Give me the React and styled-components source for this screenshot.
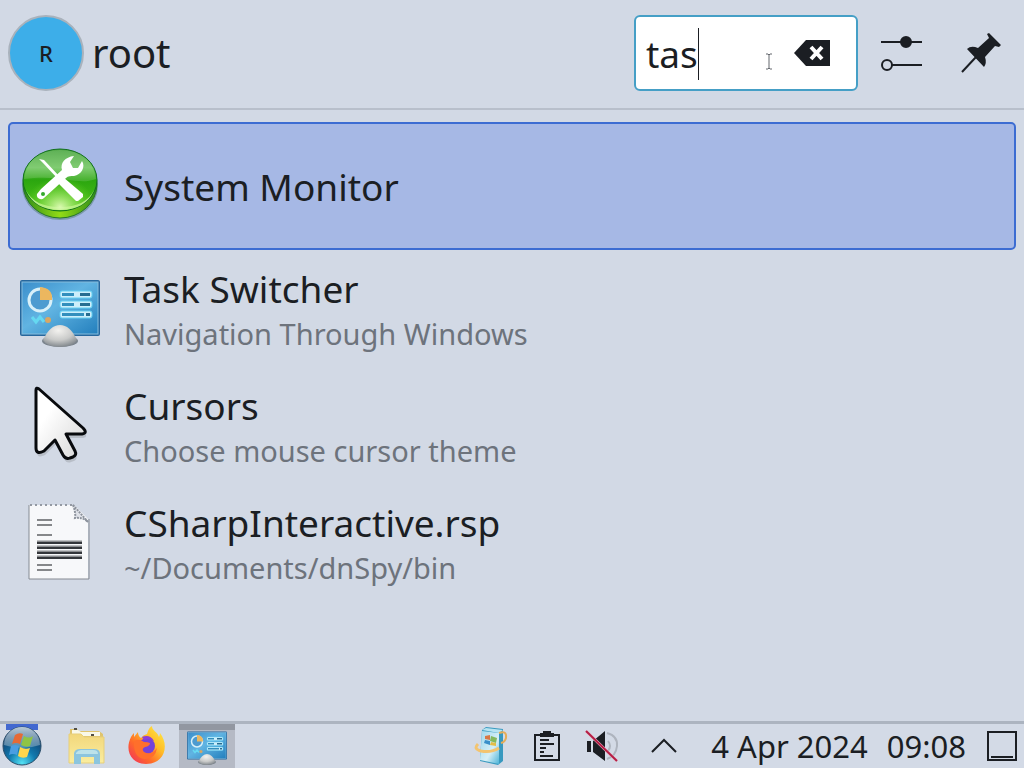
import React, { useState } from "react";
import styled, { createGlobalStyle } from "styled-components";

const GlobalStyle = createGlobalStyle`
  * {
    box-sizing: border-box;
  }
  body {
    margin: 0;
    background: #d2d9e5;
    color: #1b1e23;
    font-family: "Noto Sans", sans-serif;
  }
  button, input {
    font: inherit;
    color: inherit;
  }
`;
const Screen = styled.div`
  min-height: 100vh;
  display: flex;
  flex-direction: column;
`;
const Header = styled.header`
  display: flex;
  align-items: center;
  justify-content: space-between;
  padding: 15px 21px 17px 8px;
  border-bottom: 2px solid #b8bfcb;
`;
const User = styled.div`
  display: flex;
  align-items: center;
  gap: 8px;
`;
const Avatar = styled.div`
  width: 76px;
  height: 76px;
  display: flex;
  align-items: center;
  justify-content: center;
  border: 2px solid #a9b2bc;
  border-radius: 50%;
  background: #3daee9;
  font-size: 22px;
  font-weight: 500;
`;
const UserName = styled.h1`
  margin: 0;
  font-size: 40px;
  line-height: 48px;
  font-weight: normal;
`;
const Tools = styled.div`
  display: flex;
  align-items: center;
  gap: 21px;
`;
const SearchBox = styled.div`
  position: relative;
  width: 224px;
  height: 76px;
  display: flex;
  align-items: center;
  padding: 0 26px 0 10px;
  border: 2px solid #459fc6;
  border-radius: 6px;
  background: #fff;
`;
const SearchInput = styled.input`
  flex: 1;
  min-width: 0;
  padding: 2px 0 0;
  border: 0;
  outline: 0;
  background: none;
  font-size: 37px;
  line-height: 50px;
  caret-color: transparent;
`;
const Caret = styled.span`
  position: absolute;
  left: 62px;
  top: 11px;
  width: 1px;
  height: 52px;
  background: #1b1e23;
`;
const Pointer = styled.svg`
  position: absolute;
  left: 129px;
  top: 36px;
  width: 8px;
  height: 17px;
`;
const IconButton = styled.button`
  display: flex;
  align-items: center;
  justify-content: center;
  padding: 0;
  border: 0;
  background: none;
`;
const ToolButtons = styled.div`
  display: flex;
  align-items: center;
  gap: 36px;
`;
const Results = styled.ul`
  flex: 1;
  margin: 0;
  padding: 12px 8px;
  list-style: none;
`;
const Result = styled.button`
  width: 100%;
  height: ${props => props.$selected ? "128px" : "117px"};
  display: flex;
  align-items: center;
  gap: 24px;
  padding: ${props => props.$selected ? "0 10px 4px" : "0 10px"};
  border: 2px solid ${props => props.$selected ? "#3c6cd2" : "transparent"};
  border-radius: 5px;
  background: ${props => props.$selected ? "#a6b8e5" : "none"};
  text-align: left;
`;
const Labels = styled.span`
  display: flex;
  flex-direction: column;
  padding-top: ${props => props.$selected ? "6px" : "0"};
`;
const Title = styled.span`
  font-size: 37px;
  line-height: 50px;
`;
const Subtitle = styled.span`
  color: #6d737c;
  font-size: 29px;
  line-height: 40px;
`;
const Taskbar = styled.footer`
  height: 47px;
  display: flex;
  align-items: stretch;
  justify-content: space-between;
  border-top: 3px solid #acb4c0;
  background: #d3dae6;
`;
const Tasks = styled.nav`
  display: flex;
  gap: 4px;
`;
const Task = styled.button`
  width: 56px;
  display: flex;
  align-items: center;
  justify-content: center;
  padding: 0;
  border: 0;
  background: ${props => props.$active ? "linear-gradient(#9297a1 6px, #b5bac5 6px)" : "none"};
`;
const StartButton = styled.button`
  width: 44px;
  display: flex;
  margin-right: 11px;
  padding: 2px 0 0 2px;
  border: 0;
  background: linear-gradient(#4268d0, #4268d0) 6px 0 / 32px 6px no-repeat;
`;
const Tray = styled.div`
  display: flex;
  align-items: center;
  padding-right: 6px;
`;
const TrayIcons = styled.div`
  display: flex;
  align-items: center;
  gap: 22px;
  margin-right: 25px;
`;
const Clock = styled.time`
  display: flex;
  gap: 19px;
  margin-right: 20px;
  font-size: 31px;
  line-height: 44px;
`;

function ToolsIcon() {
  return (
    <svg width="80" height="80" viewBox="0 0 80 80">
      <defs>
        <linearGradient id="disc" x1="0" y1="0" x2="0" y2="1">
          <stop offset="0" stopColor="#43a239" />
          <stop offset=".3" stopColor="#6cc45b" />
          <stop offset=".5" stopColor="#2ba60f" />
          <stop offset="1" stopColor="#52c51a" />
        </linearGradient>
        <radialGradient id="discGlow" cx=".5" cy=".95" r=".5">
          <stop offset="0" stopColor="#d9f9b0" />
          <stop offset="1" stopColor="#7be329" stopOpacity="0" />
        </radialGradient>
        <linearGradient id="rim" x1="0" x2="1">
          <stop offset="0" stopColor="#2f8c17" />
          <stop offset=".5" stopColor="#92db16" />
          <stop offset="1" stopColor="#2f8c17" />
        </linearGradient>
      </defs>
      <ellipse cx="40" cy="42" rx="38" ry="34" fill="#3b6b55" opacity=".4" />
      <ellipse cx="40" cy="40" rx="37" ry="34" fill="url(#rim)" stroke="#28762b" />
      <ellipse cx="40" cy="36" rx="37" ry="31" fill="url(#disc)" stroke="#147021" />
      <path d="M6 46Q14 63 40 63T74 46Q66 66 40 66T6 46Z" fill="#b9ee89" />
      <ellipse cx="40" cy="36" rx="35" ry="30" fill="url(#discGlow)" />
      <path d="M4 35C6 17 20 6 40 6s34 11 36 29C57 42 43 30 4 35Z" fill="#fff" opacity=".14" />
      <path d="M19 15l5 1 16 17-2 2-15-16Z" fill="#fff" />
      <path d="M37 38l6-5 20 17v3l-5 4h-2Z" fill="#fff" />
      <path d="M42 26C40 19 45 13 54 12l-4 6 3 6 5 0 4-7c4 6-1 14-8 15-3 0-6 0-8 2L24 54c-3 3-8 0-7-4l4-5Z" fill="#fff" />
      <circle cx="23" cy="50" r="2" fill="#35a92c" />
    </svg>
  );
}

function MonitorIcon({ size = 80 }) {
  return (
    <svg width={size} height={size} viewBox="0 -2 80 80">
      <defs>
        <linearGradient id="panel" x1="0" y1="0" x2="1" y2="1">
          <stop offset="0" stopColor="#3b8fcc" />
          <stop offset=".45" stopColor="#61b4e2" />
          <stop offset="1" stopColor="#237fbd" />
        </linearGradient>
        <radialGradient id="dome" cx=".45" cy=".25" r=".8">
          <stop offset="0" stopColor="#f3f2ef" />
          <stop offset=".55" stopColor="#c9cac9" />
          <stop offset="1" stopColor="#777e84" />
        </radialGradient>
      </defs>
      <rect x="0" y="9" width="80" height="56" rx="2" fill="#26679d" />
      <rect x="2" y="11" width="76" height="52" fill="url(#panel)" stroke="#86bddd" />
      <circle cx="20" cy="29" r="11" fill="#4d9bd0" stroke="#d8f0f9" strokeWidth="3" />
      <path d="M20 29V16q13 1 12 13Z" fill="#ecb75f" />
      <path d="M12 46l4 5 4-5 4 5" fill="none" stroke="#65d9f1" strokeWidth="3" />
      <circle cx="28" cy="49" r="3" fill="#d8a664" />
      {[20, 30, 40].map(y => (
        <g key={y}>
          <rect x="40" y={y} width="32" height="7" rx="2" fill="#cceefa" stroke="#63cff2" />
          <rect x="42" y={y + 2} width={y === 40 ? 22 : 12} height="3" fill="#328fbd" />
          <rect x={y === 40 ? 66 : 60} y={y + 2} width={y === 40 ? 4 : 10} height="3" fill="#276d91" />
        </g>
      ))}
      <ellipse cx="40" cy="70" rx="18" ry="6" fill="#7c858e" />
      <path d="M23 69q7-15 17-15t17 15q-4 7-17 7t-17-7Z" fill="url(#dome)" />
    </svg>
  );
}

function CursorIcon() {
  return (
    <svg width="80" height="80" viewBox="0 0 80 80">
      <defs>
        <linearGradient id="arrow" x1="0" y1="0" x2="1" y2="1">
          <stop offset=".3" stopColor="#fff" />
          <stop offset="1" stopColor="#d5d5d5" />
        </linearGradient>
      </defs>
      <path d="M16 6q0-3 3-1l44 39q5 5-1 6H46l9 17q2 4-2 6l-3 1q-4 2-7-3L35 56 24 67q-8 4-8-3Z" fill="#444" opacity=".18" transform="translate(1 2)" />
      <path d="M16 4q0-3 3-1l44 39q5 5-1 6H46l9 17q2 4-2 6l-3 1q-4 2-7-3L35 54 24 65q-8 4-8-3Z" fill="url(#arrow)" stroke="#080a0d" strokeWidth="3" strokeLinejoin="round" />
    </svg>
  );
}

function DocumentIcon() {
  return (
    <svg width="80" height="80" viewBox="0 0 80 80">
      <path d="M9 2h45l14 14v60H9Z" fill="#f7f8fa" />
      <path d="M9 2v74h60V16" fill="none" stroke="#858a92" strokeWidth="1" />
      <path d="M10 2h43" stroke="#9399a2" strokeWidth="2" strokeDasharray="2 3" />
      <path d="M53 2q3 8 2 13 8-1 13 4Z" fill="#dfe2e8" stroke="#8d939d" strokeWidth="2" strokeDasharray="2 1" />
      <path d="M17 17h15m-15 5h15m-15 10h15m-15 30h15m-15 5h15" stroke="#85878a" strokeWidth="2" />
      <path d="M17 39h45m-45 5h45m-45 5h45m-45 5h45" stroke="#8b8d90" strokeWidth="3" />
      <path d="M17 40h45m-45 5h45m-45 5h45m-45 5h45" stroke="#34373b" strokeWidth="2" />
    </svg>
  );
}

function ClearIcon() {
  return (
    <svg width="36" height="26" viewBox="0 0 36 26">
      <path d="M0 13L12 0h24v26H12Z" fill="#1b1e23" />
      <path d="M17 7l11 12m0-12L17 19" stroke="#fff" strokeWidth="4" />
    </svg>
  );
}

function SlidersIcon() {
  return (
    <svg width="44" height="40" viewBox="0 0 44 40" fill="none" stroke="#1b1e23" strokeWidth="2">
      <path d="M2 9h41M13 32h30" />
      <circle cx="27" cy="9" r="5" fill="#1b1e23" />
      <circle cx="8" cy="32" r="5" />
    </svg>
  );
}

function PinIcon() {
  return (
    <svg width="44" height="44" viewBox="0 0 44 44" fill="#1b1e23">
      <path d="M28 3l2-1 12 12-2 2-4-1-10 11q2 6-1 10L8 18q4-4 11-1L30 7Z" />
      <path d="M17 26L3 41" stroke="#1b1e23" strokeWidth="2" />
    </svg>
  );
}

function StartIcon() {
  return (
    <svg width="40" height="40" viewBox="0 0 40 40">
      <defs>
        <radialGradient id="orb" cx=".5" cy=".95" r=".8">
          <stop offset="0" stopColor="#55e2f4" />
          <stop offset=".45" stopColor="#1179ae" />
          <stop offset="1" stopColor="#103f6e" />
        </radialGradient>
        <linearGradient id="shine" x1="0" y1="0" x2="0" y2="1">
          <stop offset="0" stopColor="#f0f7fb" stopOpacity=".75" />
          <stop offset="1" stopColor="#9cb9c9" stopOpacity=".45" />
        </linearGradient>
      </defs>
      <circle cx="20" cy="20" r="19" fill="url(#orb)" stroke="#294c68" />
      <path d="M2 19a18 18 0 0 1 36 0q-18 6-36 0Z" fill="url(#shine)" />
      <path d="M13 9q4-3 8-1l-3 10q-4-2-8 0Z" fill="#e66a35" />
      <path d="M22 10q5 3 9 0l-3 10q-4 2-9-1Z" fill="#8fc445" />
      <path d="M9 20q4-2 8 0l-2 9q-4-2-8 0Z" fill="#4a9ee2" />
      <path d="M18 21q5 3 10 1l-3 9q-5 2-9-1Z" fill="#ffd64b" />
    </svg>
  );
}

function FolderIcon() {
  return (
    <svg width="40" height="40" viewBox="0 0 40 40">
      <defs>
        <linearGradient id="folder" x1="0" y1="0" x2="0" y2="1">
          <stop offset="0" stopColor="#f2d77b" />
          <stop offset="1" stopColor="#faed9f" />
        </linearGradient>
      </defs>
      <path d="M3 3h7l2 2h20l4 3v27l-4 2H3Z" fill="#dfc46e" />
      <path d="M5 4h6l3 2h19v4H5Z" fill="#f9f8e8" />
      <path d="M2 8h12l3 3h20v26H2Z" fill="url(#folder)" stroke="#e7cf7b" />
      <path d="M7 38V27q1-4 6-4h14q6 0 6 5v10h-6v-7H14v7Z" fill="#8cc5de" />
      <path d="M9 27q2-3 5-3h12q5 0 5 4H9Z" fill="#bce2ea" />
      <path d="M7 3h3m14 6h3" stroke="#524f44" strokeWidth="2" />
    </svg>
  );
}

function FirefoxIcon() {
  return (
    <svg width="40" height="40" viewBox="0 0 40 40">
      <defs>
        <linearGradient id="fox" x1="1" y1="0" x2="0" y2="1">
          <stop offset="0" stopColor="#fff04a" />
          <stop offset=".38" stopColor="#ffbc27" />
          <stop offset=".65" stopColor="#ff6c29" />
          <stop offset="1" stopColor="#ef2863" />
        </linearGradient>
      </defs>
      <path d="M20 8q2-7 5-8c0 5 5 5 7 11q1-2 1-4c10 13 4 31-14 31C5 38-3 25 4 11q1-2 3-4v4l4-5q0 4 3 6 2-3 6-4Z" fill="url(#fox)" />
      <circle cx="20" cy="20" r="8" fill="#7542d9" />
      <path d="M15 11q8-3 12 4-5-3-10-1Z" fill="#8e3fd6" />
      <path d="M7 15q5-3 10 1 4 0 6 1 0 3-5 4-4 2-1 5 7 4 13-4-2 12-13 11Q6 31 7 15Z" fill="#ff6f2b" />
    </svg>
  );
}

function UpdateIcon() {
  return (
    <svg width="36" height="40" viewBox="0 0 36 40">
      <defs>
        <linearGradient id="box" x1="0" y1="0" x2="1" y2="1">
          <stop offset="0" stopColor="#9fd8ed" />
          <stop offset=".6" stopColor="#d6eff6" />
          <stop offset="1" stopColor="#4cb3d8" />
        </linearGradient>
      </defs>
      <path d="M8 4l4-3 17 2v32l-5 4-18-4Z" fill="#3899bf" />
      <path d="M8 5l17 2v31L6 34Z" fill="url(#box)" />
      <path d="M8 4l4-2 17 2-4 3Z" fill="#b7e4f1" />
      <path d="M11 10l5-1v5l-5-1Z" fill="#d87845" />
      <path d="M17 10l6 2-1 5-6-2Z" fill="#85b95d" />
      <path d="M11 14l5 1v4l-6-2Z" fill="#398fc9" />
      <path d="M17 16l5 1v3l-6-1Z" fill="#e4bd45" />
      <path d="M25 22Q17 27 7 25q-8-2-3-7" fill="none" stroke="#f3c46f" strokeWidth="3" />
      <path d="M25 7q8-3 7 5-1 4-5 5" fill="none" stroke="#e7ad58" strokeWidth="2" />
    </svg>
  );
}

function ClipboardIcon() {
  return (
    <svg width="30" height="32" viewBox="0 0 30 32" fill="none" stroke="#1b1e23" strokeWidth="2">
      <rect x="3" y="5" width="24" height="25" />
      <path d="M8 3h3V1h8v2h3v4H8Z" fill="#1b1e23" stroke="none" />
      <path d="M8 10h9M8 14h14M8 18h6M8 22h4M8 26h13" />
    </svg>
  );
}

function MutedIcon() {
  return (
    <svg width="36" height="34" viewBox="0 0 36 34">
      <path d="M3 12h4v11H3ZM9 12L21 2v30L9 23Z" fill="#1b1e23" />
      <path d="M24 12q4 5 0 10m-1-18q11 3 10 13-1 10-10 13" fill="none" stroke="#aeb4be" strokeWidth="2" />
      <path d="M2 2l31 30" stroke="#e6bfcd" strokeWidth="3" />
      <path d="M2 2l31 30" stroke="#b51e45" strokeWidth="2" />
    </svg>
  );
}

const results = [
  { title: "System Monitor", icon: <ToolsIcon /> },
  { title: "Task Switcher", subtitle: "Navigation Through Windows", icon: <MonitorIcon /> },
  { title: "Cursors", subtitle: "Choose mouse cursor theme", icon: <CursorIcon /> },
  { title: "CSharpInteractive.rsp", subtitle: "~/Documents/dnSpy/bin", icon: <DocumentIcon /> },
];

export default function App() {
  const [query, setQuery] = useState("tas");

  return (
    <Screen>
      <GlobalStyle />
      <Header>
        <User>
          <Avatar>R</Avatar>
          <UserName>root</UserName>
        </User>
        <Tools>
          <SearchBox>
            <SearchInput aria-label="Search" value={query} onChange={e => setQuery(e.target.value)} />
            {query === "tas" && <Caret />}
            <Pointer viewBox="0 0 8 17" fill="none" stroke="#62666c">
              <path d="M1 1h2l1 1 1-1h2M4 2v13M1 16h2l1-1 1 1h2" />
            </Pointer>
            <IconButton aria-label="Clear search" onClick={() => setQuery("")}><ClearIcon /></IconButton>
          </SearchBox>
          <ToolButtons>
            <IconButton aria-label="Configure"><SlidersIcon /></IconButton>
            <IconButton aria-label="Keep open"><PinIcon /></IconButton>
          </ToolButtons>
        </Tools>
      </Header>
      <Results>
        {results.map((item, index) => (
          <li key={item.title}>
            <Result $selected={index === 0}>
              {item.icon}
              <Labels $selected={index === 0}>
                <Title>{item.title}</Title>
                {item.subtitle && <Subtitle>{item.subtitle}</Subtitle>}
              </Labels>
            </Result>
          </li>
        ))}
      </Results>
      <Taskbar>
        <Tasks>
          <StartButton aria-label="Start"><StartIcon /></StartButton>
          <Task aria-label="Files"><FolderIcon /></Task>
          <Task aria-label="Firefox"><FirefoxIcon /></Task>
          <Task $active aria-label="System Settings"><MonitorIcon size={40} /></Task>
        </Tasks>
        <Tray>
          <TrayIcons>
            <IconButton aria-label="Updates"><UpdateIcon /></IconButton>
            <IconButton aria-label="Clipboard"><ClipboardIcon /></IconButton>
            <IconButton aria-label="Volume"><MutedIcon /></IconButton>
            <IconButton aria-label="Show hidden icons">
              <svg width="44" height="18" viewBox="0 0 44 18" fill="none" stroke="#1b1e23" strokeWidth="2">
                <path d="M10 15L22 3l12 12" />
              </svg>
            </IconButton>
          </TrayIcons>
          <Clock dateTime="2024-04-04T09:08">
            <span>4 Apr 2024</span>
            <span>09:08</span>
          </Clock>
          <IconButton aria-label="Show desktop">
            <svg width="32" height="32" viewBox="0 0 32 32" fill="none" stroke="#1b1e23" strokeWidth="2">
              <path d="M2 2h28v28H2ZM5 27h22" />
            </svg>
          </IconButton>
        </Tray>
      </Taskbar>
    </Screen>
  );
}
